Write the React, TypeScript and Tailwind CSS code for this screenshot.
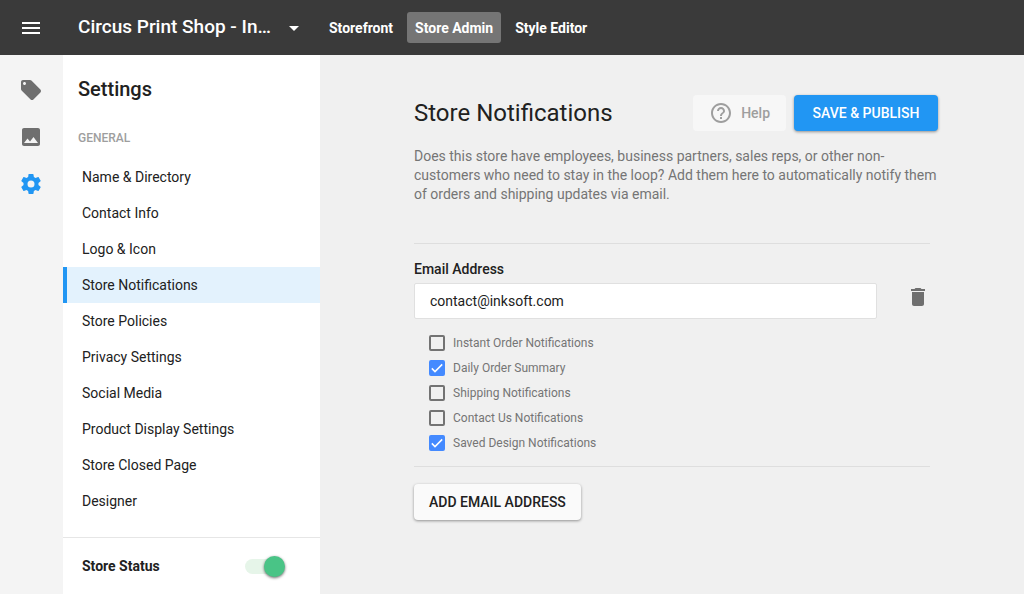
import { useState } from "react";
import { MdArrowDropDown, MdDelete, MdHelpOutline, MdImage, MdLocalOffer, MdMenu } from "react-icons/md";

const FONT = "font-['Roboto','Liberation_Sans',sans-serif]";

const tabs = ["Storefront", "Store Admin", "Style Editor"];

const settingsLinks = [
  "Name & Directory",
  "Contact Info",
  "Logo & Icon",
  "Store Notifications",
  "Store Policies",
  "Privacy Settings",
  "Social Media",
  "Product Display Settings",
  "Store Closed Page",
  "Designer",
];

const initialOptions = [
  { id: "instant", label: "Instant Order Notifications", checked: false },
  { id: "daily", label: "Daily Order Summary", checked: true },
  { id: "shipping", label: "Shipping Notifications", checked: false },
  { id: "contact", label: "Contact Us Notifications", checked: false },
  { id: "saved", label: "Saved Design Notifications", checked: true },
];

function GearIcon({ className }: { className?: string }) {
  return (
    <svg className={className} viewBox="0 0 24 24" fill="currentColor" aria-hidden="true">
      <path d="M12 15.5A3.5 3.5 0 0 1 8.5 12 3.5 3.5 0 0 1 12 8.5a3.5 3.5 0 0 1 3.5 3.5 3.5 3.5 0 0 1-3.5 3.5m7.43-2.53c.04-.32.07-.64.07-.97s-.03-.66-.07-1l2.11-1.63c.19-.15.24-.42.12-.64l-2-3.46c-.12-.22-.39-.31-.61-.22l-2.49 1c-.52-.39-1.06-.73-1.69-.98l-.37-2.65A.506.506 0 0 0 14 2h-4c-.25 0-.46.18-.5.42l-.37 2.65c-.63.25-1.17.59-1.69.98l-2.49-1c-.22-.09-.49 0-.61.22l-2 3.46c-.13.22-.07.49.12.64L4.57 11c-.04.34-.07.67-.07 1s.03.65.07.97l-2.11 1.66c-.19.15-.25.42-.12.64l2 3.46c.12.22.39.3.61.22l2.49-1.01c.52.4 1.06.74 1.69.99l.37 2.65c.04.24.25.42.5.42h4c.25 0 .46-.18.5-.42l.37-2.65c.63-.26 1.17-.59 1.69-.99l2.49 1.01c.22.08.49 0 .61-.22l2-3.46c.12-.22.07-.49-.12-.64z" />
    </svg>
  );
}

function TopBar() {
  return (
    <header className="flex h-[55px] shrink-0 items-center bg-[#3a3a3a] text-white">
      <button type="button" aria-label="Menu" className="flex w-[63px] shrink-0 justify-center pr-0.5">
        <MdMenu className="h-6 w-6" />
      </button>
      <button type="button" className="flex w-[258px] shrink-0 items-center justify-between px-[15px]">
        <span className="whitespace-nowrap text-[19px] font-medium">Circus Print Shop - In…</span>
        <MdArrowDropDown className="h-6 w-6 shrink-0" />
      </button>
      <nav className="flex items-center gap-1.5">
        {tabs.map((tab) => (
          <a
            key={tab}
            href="#"
            className={`flex h-[31px] items-center whitespace-nowrap rounded-[3px] px-2 text-sm font-bold ${
              tab === "Store Admin" ? "bg-[#757575]" : ""
            }`}
          >
            {tab}
          </a>
        ))}
      </nav>
    </header>
  );
}

function IconRail() {
  return (
    <nav className="flex w-[63px] shrink-0 flex-col items-center gap-[23px] bg-[#f4f4f4] pr-0.5 pt-[23px] text-[#6f6f6f]">
      <a href="#" aria-label="Products">
        <MdLocalOffer className="h-6 w-6" />
      </a>
      <a href="#" aria-label="Art">
        <MdImage className="h-6 w-6" />
      </a>
      <a href="#" aria-label="Settings" className="text-[#2196f3]">
        <GearIcon className="h-6 w-6" />
      </a>
    </nav>
  );
}

function SettingsSidebar() {
  const [open, setOpen] = useState(true);

  return (
    <aside className="flex w-[257px] shrink-0 flex-col bg-white text-[#212121]">
      <h1 className="px-[15px] pt-5 text-xl font-medium">Settings</h1>
      <h2 className="px-[15px] pt-[27px] text-xs font-medium text-[#9e9e9e]">GENERAL</h2>
      <ul className="mt-[13px] pb-[18px]">
        {settingsLinks.map((link) => (
          <li key={link}>
            <a
              href="#"
              className={`flex h-9 items-center border-l-4 px-[15px] text-sm ${
                link === "Store Notifications" ? "border-[#2196f3] bg-[#e3f2fd]" : "border-transparent"
              }`}
            >
              {link}
            </a>
          </li>
        ))}
      </ul>
      <div className="mt-auto flex h-[57px] items-center justify-between border-t border-[#e6e6e6] pl-[19px] pr-[35px]">
        <label htmlFor="store-status" className="text-sm font-bold">
          Store Status
        </label>
        <span className="relative flex h-[21px] w-10 items-center">
          <span className="h-[15px] w-9 rounded-full bg-[#e6f5e9]" />
          <input
            id="store-status"
            type="checkbox"
            role="switch"
            checked={open}
            onChange={() => setOpen(!open)}
            className="peer absolute inset-0 z-10 h-full w-full cursor-pointer appearance-none"
          />
          <span className="absolute left-0 h-[21px] w-[21px] rounded-full bg-[#bdbdbd] shadow-[0_1px_3px_rgba(0,0,0,0.6)] peer-checked:left-auto peer-checked:right-0 peer-checked:bg-[#49c486]" />
        </span>
      </div>
    </aside>
  );
}

function NotificationOptions() {
  const [options, setOptions] = useState(initialOptions);

  const toggle = (id: string) =>
    setOptions(options.map((o) => (o.id === id ? { ...o, checked: !o.checked } : o)));

  return (
    <div className="mt-[11px] pl-[15px]">
      {options.map((option) => (
        <label key={option.id} className="flex h-[25px] items-center gap-2 text-xs text-[#757575]">
          <span className="relative flex h-4 w-4">
            <input
              type="checkbox"
              checked={option.checked}
              onChange={() => toggle(option.id)}
              className="h-4 w-4 appearance-none rounded-[2px] border-2 border-[#737373] checked:border-[#448aff] checked:bg-[#448aff]"
            />
            {option.checked && (
              <svg className="pointer-events-none absolute inset-0 h-4 w-4" viewBox="0 0 16 16" fill="none" aria-hidden="true">
                <path d="M2.8 8.4 6 11.6 13.2 4.4" stroke="white" strokeWidth="1.5" />
              </svg>
            )}
          </span>
          {option.label}
        </label>
      ))}
    </div>
  );
}

function NotificationsPage() {
  return (
    <main className="min-w-0 flex-1 bg-[#f0f0f0] px-6 pb-10 pt-10 text-[#212121]">
      <div className="mx-auto max-w-[516px]">
        <div className="-mr-2 flex items-center">
          <h2 className="flex-1 whitespace-nowrap text-2xl">Store Notifications</h2>
          <button
            type="button"
            className="mr-2 flex h-9 items-center gap-2 rounded-[4px] bg-[#f7f7f7] px-4 text-sm font-medium text-[#9e9e9e]"
          >
            <MdHelpOutline className="h-6 w-6" />
            Help
          </button>
          <button
            type="button"
            className="h-9 w-36 rounded-[4px] bg-[#2196f3] text-sm font-medium text-white shadow-[0_1px_3px_rgba(0,0,0,0.4)]"
          >
            SAVE &amp; PUBLISH
          </button>
        </div>

        <p className="-mr-3 mt-4 text-sm leading-[19px] text-[#757575]">
          Does this store have employees, business partners, sales reps, or other non-customers who need to stay in the
          loop? Add them here to automatically notify them of orders and shipping updates via email.
        </p>

        <section className="mt-[39px] border-y border-[#dedede] pb-[11px] pt-4">
          <label htmlFor="email" className="block text-sm leading-[18px] font-medium">
            Email Address
          </label>
          <div className="mt-[5px] flex items-center">
            <input
              id="email"
              type="email"
              defaultValue="contact@inksoft.com"
              className="h-9 min-w-0 flex-1 rounded-[2px] border border-[#e0e0e0] bg-white px-[15px] text-sm"
            />
            <button type="button" aria-label="Delete email address" className="mb-2 ml-[29px] text-[#6f6f6f]">
              <MdDelete className="h-6 w-6" />
            </button>
          </div>
          <NotificationOptions />
        </section>

        <button
          type="button"
          className="mt-[17px] h-9 rounded-[4px] bg-[#fafafa] px-[15px] text-sm font-medium shadow-[0_1px_3px_rgba(0,0,0,0.4)]"
        >
          ADD EMAIL ADDRESS
        </button>
      </div>
    </main>
  );
}

export default function App() {
  return (
    <div className={`flex min-h-screen flex-col ${FONT}`}>
      <TopBar />
      <div className="flex flex-1">
        <IconRail />
        <SettingsSidebar />
        <NotificationsPage />
      </div>
    </div>
  );
}
